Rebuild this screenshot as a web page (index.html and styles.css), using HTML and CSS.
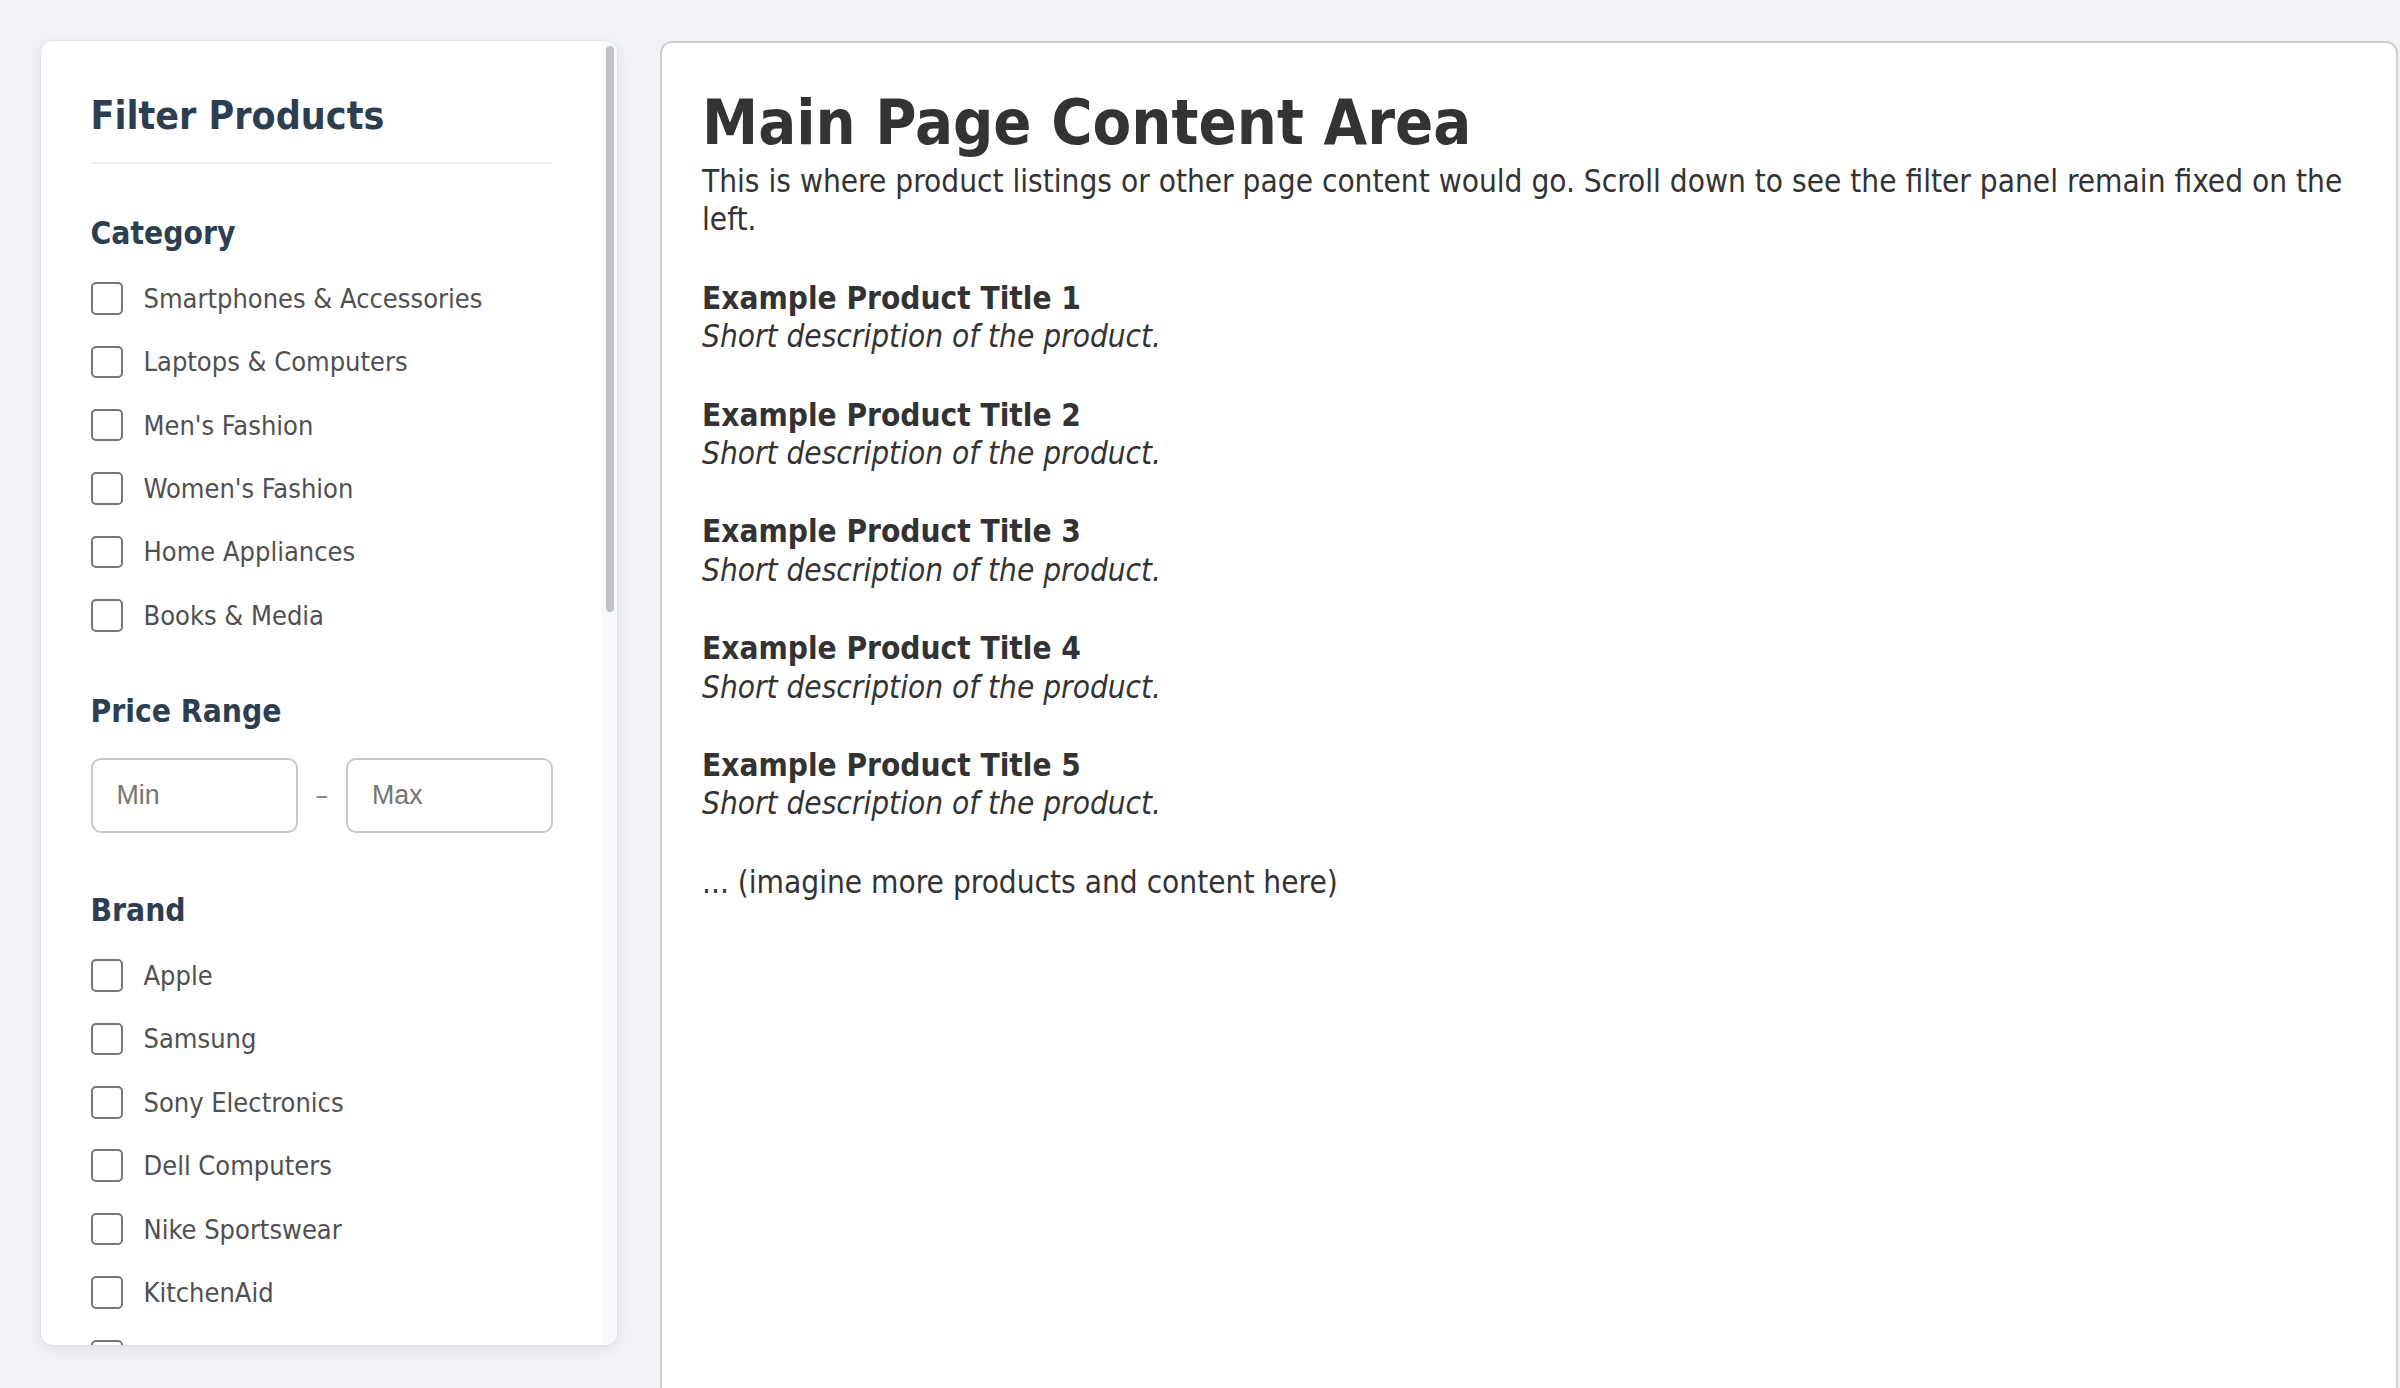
FILE: index.html
```html
<!DOCTYPE html>
<html lang="en">
<head>
<meta charset="utf-8">
<title>Filter Products</title>
<link rel="stylesheet" href="styles.css">
</head>
<body>
<div class="layout">
  <aside class="filters">
    <div class="filters-scroll">
      <h2 class="filters-title">Filter Products</h2>

      <section class="filter-group">
        <h3 class="group-title">Category</h3>
        <div class="options">
          <label class="option"><input type="checkbox"><span>Smartphones &amp; Accessories</span></label>
          <label class="option"><input type="checkbox"><span>Laptops &amp; Computers</span></label>
          <label class="option"><input type="checkbox"><span>Men's Fashion</span></label>
          <label class="option"><input type="checkbox"><span>Women's Fashion</span></label>
          <label class="option"><input type="checkbox"><span>Home Appliances</span></label>
          <label class="option"><input type="checkbox"><span>Books &amp; Media</span></label>
        </div>
      </section>

      <section class="filter-group">
        <h3 class="group-title">Price Range</h3>
        <div class="price-row">
          <input class="price-input" type="text" placeholder="Min">
          <span class="dash">–</span>
          <input class="price-input" type="text" placeholder="Max">
        </div>
      </section>

      <section class="filter-group">
        <h3 class="group-title">Brand</h3>
        <div class="options">
          <label class="option"><input type="checkbox"><span>Apple</span></label>
          <label class="option"><input type="checkbox"><span>Samsung</span></label>
          <label class="option"><input type="checkbox"><span>Sony Electronics</span></label>
          <label class="option"><input type="checkbox"><span>Dell Computers</span></label>
          <label class="option"><input type="checkbox"><span>Nike Sportswear</span></label>
          <label class="option"><input type="checkbox"><span>KitchenAid</span></label>
          <label class="option"><input type="checkbox"><span>Bose Audio</span></label>
          <label class="option"><input type="checkbox"><span>Adidas</span></label>
        </div>
      </section>
    </div>
    <div class="scrollbar" aria-hidden="true"><div class="scrollbar-thumb"></div></div>
  </aside>

  <main class="content">
    <h1 class="page-title">Main Page Content Area</h1>
    <p class="intro">This is where product listings or other page content would go. Scroll down to see the filter panel remain fixed on the left.</p>

    <div class="product">
      <h3 class="product-title">Example Product Title 1</h3>
      <p class="product-desc">Short description of the product.</p>
    </div>
    <div class="product">
      <h3 class="product-title">Example Product Title 2</h3>
      <p class="product-desc">Short description of the product.</p>
    </div>
    <div class="product">
      <h3 class="product-title">Example Product Title 3</h3>
      <p class="product-desc">Short description of the product.</p>
    </div>
    <div class="product">
      <h3 class="product-title">Example Product Title 4</h3>
      <p class="product-desc">Short description of the product.</p>
    </div>
    <div class="product">
      <h3 class="product-title">Example Product Title 5</h3>
      <p class="product-desc">Short description of the product.</p>
    </div>

    <p class="more">... (imagine more products and content here)</p>
  </main>
</div>
</body>
</html>
```

FILE: styles.css
```css
html, body {
  margin: 0;
  padding: 0;
  height: 100%;
  overflow: hidden;
}

body {
  background: #f0f2f5;
  font-family: "DejaVu Sans Condensed", "DejaVu Sans", sans-serif;
  color: #333;
}

.layout {
  display: flex;
  align-items: flex-start;
  gap: 43px;
  padding: 41px 0 0 41px;
}

/* ---------- Sidebar ---------- */
.filters {
  position: relative;
  flex: 0 0 576px;
  height: 1304px;
  overflow: hidden;
  background: #fff;
  border-radius: 12px;
  box-shadow: 0 0 0 1px rgba(0, 0, 0, 0.03), 0 4px 14px rgba(0, 0, 0, 0.08);
}

.filters-scroll {
  box-sizing: border-box;
  height: 100%;
  overflow: hidden;
  padding: 49.5px 64px 49.5px 49.5px;
}

.scrollbar {
  position: absolute;
  top: 0;
  right: 0;
  bottom: 0;
  width: 15px;
  background: #f8f9fa;
}

.scrollbar-thumb {
  position: absolute;
  top: 5px;
  left: 3.5px;
  width: 8px;
  height: 566px;
  border-radius: 4px;
  background: #bdc3c7;
}

.filters-title {
  margin: 0 0 51.6px;
  padding-bottom: 22.5px;
  border-bottom: 2px solid #ecf0f1;
  font-size: 39px;
  line-height: 49px;
  font-weight: bold;
  color: #2c3e50;
}

.filter-group {
  margin-bottom: 59.8px;
}

.group-title {
  margin: 0 0 29.6px;
  font-size: 31.5px;
  line-height: 34px;
  font-weight: bold;
  color: #2c3e50;
}

.options {
  display: flex;
  flex-direction: column;
  gap: 25px;
}

.option {
  display: flex;
  align-items: center;
  gap: 20.5px;
  height: 38.4px;
  font-size: 27px;
  color: #505050;
  cursor: pointer;
}

.option input {
  -webkit-appearance: none;
  appearance: none;
  flex: 0 0 auto;
  box-sizing: border-box;
  width: 32.5px;
  height: 32.5px;
  margin: 0;
  border: 2px solid #767676;
  border-radius: 5px;
  background: #fff;
}

.price-row {
  display: flex;
  align-items: center;
  justify-content: space-between;
}

.price-input {
  box-sizing: border-box;
  width: 207px;
  height: 75px;
  padding: 0 24px;
  border: 2px solid #c5cacf;
  border-radius: 10px;
  font-family: "Liberation Sans", Arial, sans-serif;
  font-size: 26.8px;
  color: #333;
  background: #fff;
  outline: none;
}
.price-input::placeholder {
  color: #757575;
}

.dash {
  font-size: 28px;
  color: #888;
}

/* ---------- Main content ---------- */
.content {
  flex: 0 0 1738px;
  box-sizing: border-box;
  min-height: 1500px;
  background: #fff;
  border: 2px solid #cfcfcf;
  border-radius: 12px;
  padding: 40px;
  font-size: 31.3px;
  line-height: 38.4px;
  color: #333;
}

.page-title {
  margin: 0;
  font-size: 62.7px;
  line-height: 79px;
  font-weight: bold;
}

.intro {
  margin: 0 0 40px;
}

.product {
  margin-bottom: 40px;
}

.product-title {
  margin: 0;
  font-size: 31.3px;
  line-height: 38.4px;
  font-weight: bold;
}

.product-desc {
  margin: 0;
  font-style: italic;
}

.more {
  margin: 0;
}
```
